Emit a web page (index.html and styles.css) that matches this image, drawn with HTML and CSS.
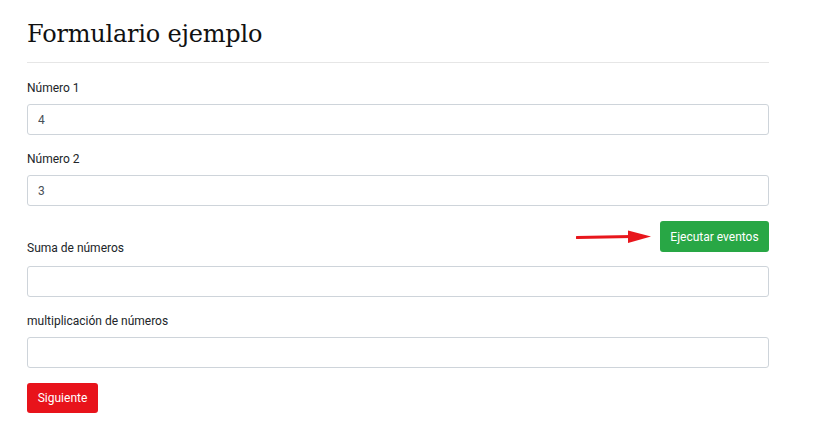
FILE: index.html
```html
<!DOCTYPE html>
<html lang="es">
<head>
<meta charset="utf-8">
<title>Formulario ejemplo</title>
<link rel="stylesheet" href="styles.css">
</head>
<body>
<main class="container">
  <h1 class="title">Formulario ejemplo</h1>
  <form class="form">
    <div class="group group-first">
      <label class="label">Número 1</label>
      <input class="input" type="text" value="4">
    </div>
    <div class="group">
      <label class="label">Número 2</label>
      <input class="input" type="text" value="3">
    </div>
    <div class="action-row">
      <svg class="arrow" width="76" height="16" viewBox="0 0 76 16">
        <path d="M1 8.5 L56 7.5" stroke="#e8161c" stroke-width="3" stroke-linecap="round" fill="none"/>
        <path d="M52 1.5 L75 7.5 L52 14 Z" fill="#e8161c"/>
      </svg>
      <button type="button" class="btn btn-green">Ejecutar eventos</button>
    </div>
    <div class="group group-tight">
      <label class="label">Suma de números</label>
      <input class="input" type="text">
    </div>
    <div class="group group-last">
      <label class="label">multiplicación de números</label>
      <input class="input" type="text">
    </div>
    <button type="button" class="btn btn-red">Siguiente</button>
  </form>
</main>
</body>
</html>
```
FILE: styles.css
```css
* { box-sizing: border-box; }
body {
  margin: 0;
  background: #ffffff;
  font-family: Roboto, "Liberation Sans", sans-serif;
  font-size: 12px;
  color: #212529;
}
.container {
  width: 742px;
  margin-left: 27px;
  padding-top: 16px;
}
.title {
  margin: 0;
  font-family: "DejaVu Serif", "Liberation Serif", serif;
  font-weight: 400;
  font-size: 24px;
  line-height: 36px;
  color: #111;
  padding-bottom: 10px;
  border-bottom: 1px solid #e6e6e6;
  letter-spacing: -0.2px;
}
.form {
  padding-top: 15px;
}
.group {
  display: flex;
  flex-direction: column;
  margin-bottom: 15px;
}
.group-first { margin-bottom: 14px; }
.label {
  line-height: 20px;
  margin-bottom: 6px;
  color: #212529;
}
.input {
  height: 31px;
  width: 100%;
  border: 1px solid #ced4da;
  border-radius: 3px;
  padding: 0 10px;
  font-family: Roboto, "Liberation Sans", sans-serif;
  font-size: 12px;
  color: #495057;
  background: #fff;
}
.action-row {
  display: flex;
  justify-content: flex-end;
  align-items: center;
  gap: 8px;
  margin-top: 1px;
  margin-bottom: -14px;
}
.arrow { display: block; }
.btn {
  border: none;
  border-radius: 3px;
  color: #fff;
  font-family: Roboto, "Liberation Sans", sans-serif;
  font-size: 12px;
  line-height: 16px;
  cursor: pointer;
}
.btn-green {
  background: #28a745;
  height: 31px;
  width: 109px;
}
.btn-red {
  background: #e8131b;
  height: 30px;
  width: 71px;
}
.group-tight { margin-bottom: 14px; }
.group-tight .label { margin-bottom: 8px; }
.group-last { margin-bottom: 15px; }
```
